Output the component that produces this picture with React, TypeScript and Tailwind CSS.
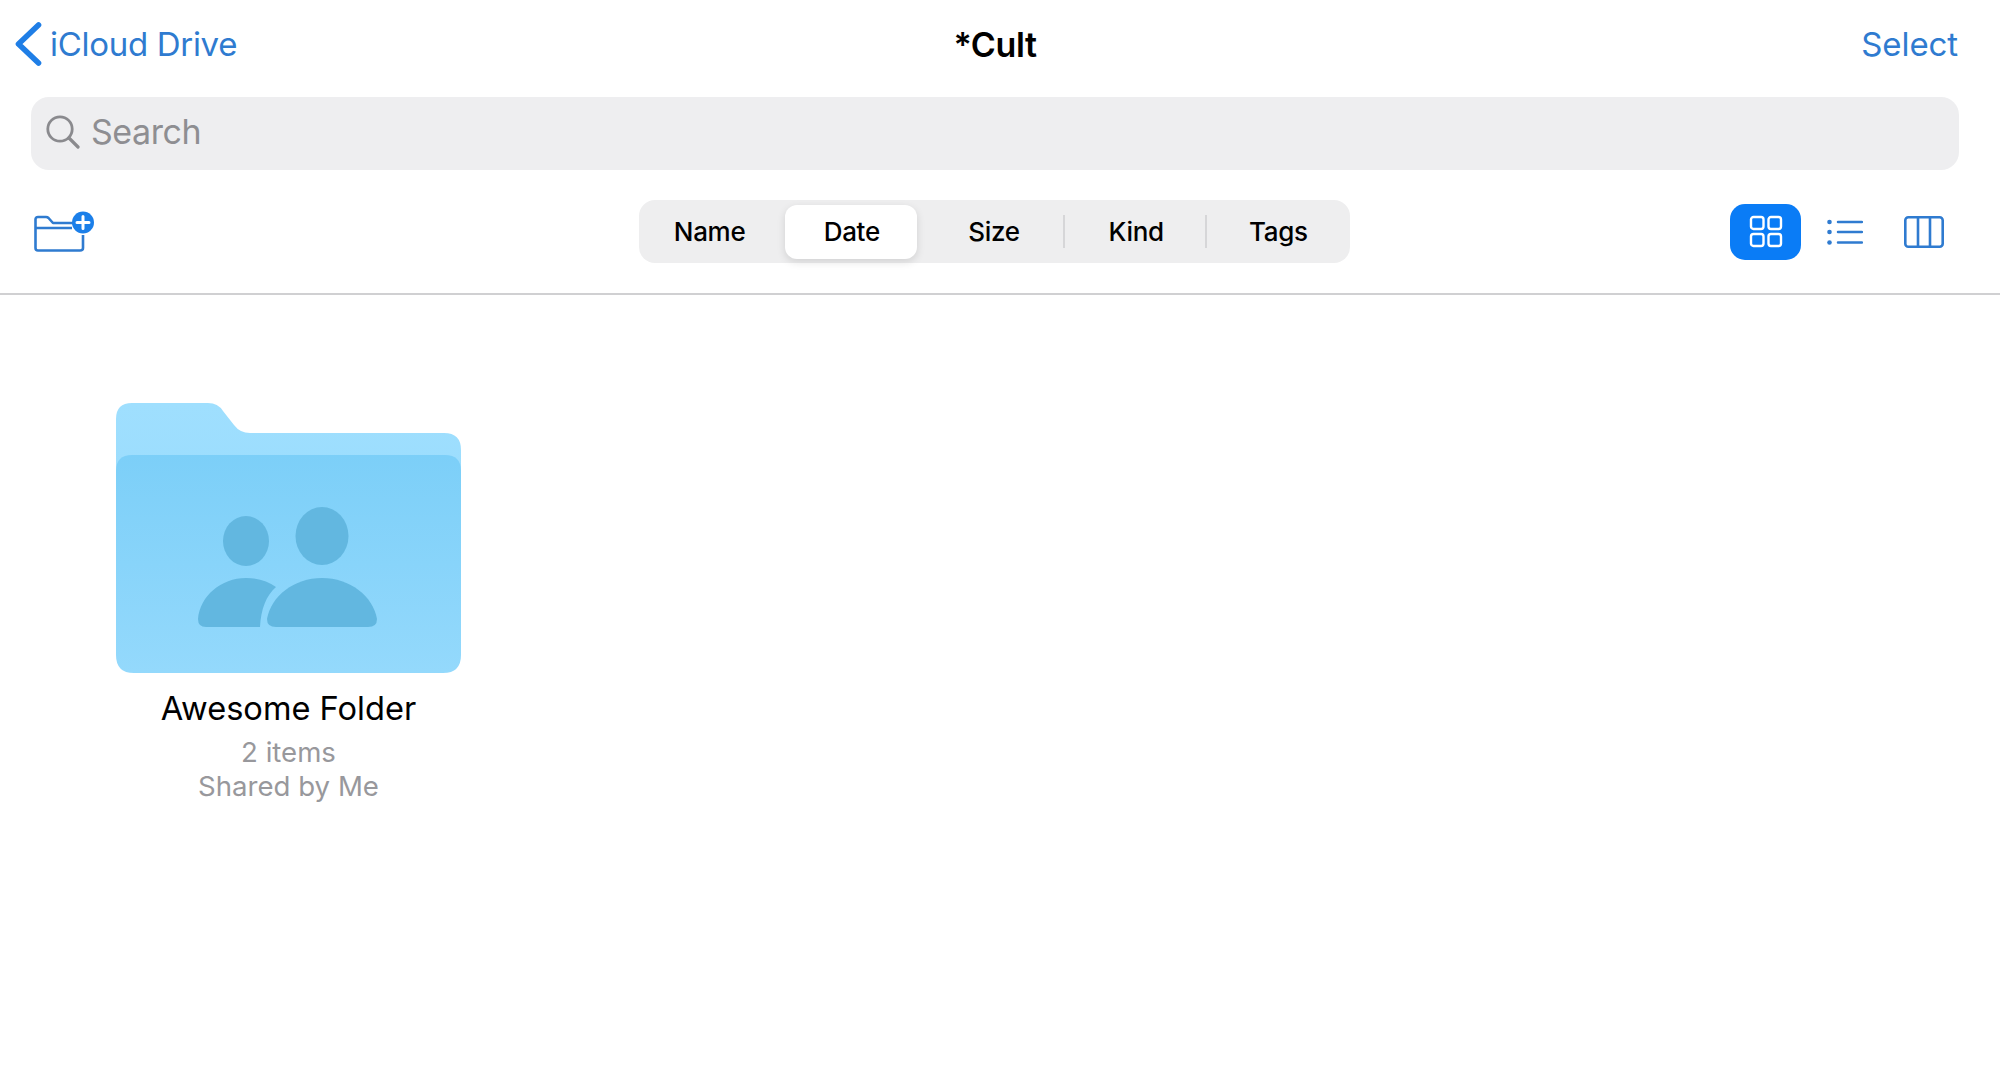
const font = { fontFamily: "Inter, 'Noto Sans', sans-serif" }

const tabs = ['Name', 'Date', 'Size', 'Kind', 'Tags']

const Chevron = () => (
    <svg width="27" height="44" viewBox="0 0 27 44" fill="none" className="shrink-0">
        <path d="M23.5 3 L3.5 22 L23.5 41" stroke="#1f7ee6" strokeWidth="5.6" strokeLinecap="round" strokeLinejoin="round" />
    </svg>
)

const SearchIcon = () => (
    <svg width="34" height="34" viewBox="0 0 34 34" fill="none" className="shrink-0">
        <circle cx="14" cy="14" r="12.2" stroke="#8a8a8e" strokeWidth="2.8" />
        <path d="M23 23 L32 32" stroke="#8a8a8e" strokeWidth="3.2" strokeLinecap="round" />
    </svg>
)

const NewFolderIcon = () => (
    <svg width="60" height="41" viewBox="0 0 60 41" fill="none">
        <path d="M46 12 H19 L14.5 7 Q13.5 6 12 6 H4 Q1.5 6 1.5 8.5 V37 Q1.5 39.5 4 39.5 H46 Q49 39.5 49 37 V24" stroke="#2f7bd0" strokeWidth="2.6" strokeLinejoin="round" />
        <path d="M1.5 17 H38" stroke="#2f7bd0" strokeWidth="2.6" />
        <circle cx="49" cy="11.5" r="11" fill="#1b7fe9" />
        <path d="M49 5.5 V17.5 M43 11.5 H55" stroke="white" strokeWidth="3" strokeLinecap="round" />
    </svg>
)

const GridIcon = () => (
    <svg width="34" height="33" viewBox="0 0 34 33" fill="none" stroke="white" strokeWidth="2.4">
        <rect x="2" y="2" width="12.5" height="12" rx="2.5" />
        <rect x="19.5" y="2" width="12.5" height="12" rx="2.5" />
        <rect x="2" y="19" width="12.5" height="12" rx="2.5" />
        <rect x="19.5" y="19" width="12.5" height="12" rx="2.5" />
    </svg>
)

const ListIcon = () => (
    <svg width="36" height="26" viewBox="0 0 36 26" fill="none">
        <circle cx="2.5" cy="3" r="2.3" fill="#2f7bd0" />
        <circle cx="2.5" cy="13" r="2.3" fill="#2f7bd0" />
        <circle cx="2.5" cy="23.5" r="2.3" fill="#2f7bd0" />
        <path d="M11 3 H35 M11 13 H35 M11 23.5 H35" stroke="#2f7bd0" strokeWidth="2.5" strokeLinecap="round" />
    </svg>
)

const ColumnsIcon = () => (
    <svg width="40" height="32" viewBox="0 0 40 32" fill="none" stroke="#2f7bd0" strokeWidth="2.6">
        <rect x="1.3" y="1.3" width="37.4" height="29.4" rx="3" />
        <path d="M14 1.3 V30.7 M26 1.3 V30.7" />
    </svg>
)

const SharedFolder = () => (
    <svg width="345" height="270" viewBox="0 0 345 270" className="block">
        <defs>
            <linearGradient id="back" x1="0" y1="0" x2="0" y2="1">
                <stop offset="0" stopColor="#9fdffe" />
                <stop offset="1" stopColor="#9adcfd" />
            </linearGradient>
            <linearGradient id="front" x1="0" y1="0" x2="0" y2="1">
                <stop offset="0" stopColor="#7ccff8" />
                <stop offset="1" stopColor="#94d9fc" />
            </linearGradient>
        </defs>
        <path d="M0 16 Q0 0 16 0 H92 Q102 0 107 8 L118 22 Q124 30 134 30 H328 Q345 30 345 47 V120 H0 Z" fill="url(#back)" />
        <path d="M0 68 Q0 52 16 52 H329 Q345 52 345 68 V252 Q345 270 327 270 H18 Q0 270 0 252 Z" fill="url(#front)" />
        <g fill="#62b7e0">
            <ellipse cx="130" cy="138" rx="23" ry="25" />
            <ellipse cx="206" cy="133" rx="26.5" ry="29" />
            <path d="M82 216 C84 193 105 175 130 175 C142 175 152 178 160 184 C150 193 145 206 144 224 H90 Q82 224 82 216 Z" />
            <path d="M151 216 C155 193 178 175 206 175 C234 175 257 193 261 216 Q261 224 252 224 H160 Q151 224 151 216 Z" />
        </g>
    </svg>
)

const App = () => {
    return (
        <div style={font} className="w-full h-[1083px] bg-white overflow-hidden antialiased">

            <div className="border-b-2 border-[#d0d0d2] h-[295px]">
                <div className="grid grid-cols-[1fr_auto_1fr] items-center h-[88px] pl-[15px] pr-[25px]">
                    <div className="flex items-center gap-[8px] text-[#2f7bd0] text-[33px] tracking-[-0.3px]">
                        <Chevron />
                        <span className="pt-[1px]">iCloud Drive</span>
                    </div>
                    <h1 className="text-[34px] font-semibold text-black tracking-[-0.4px]">*Cult</h1>
                    <div className="text-right pt-[1px] pr-[17px] text-[#2f7bd0] text-[33px] tracking-[-0.1px]">Select</div>
                </div>

                <div className="flex items-center gap-[11px] h-[73px] mt-[9px] ml-[31px] mr-[41px] pl-[15px] pb-[3px] rounded-[18px] bg-[#eeeef0]">
                    <SearchIcon />
                    <span className="mb-[2px] text-[34px] text-[#8e8e92] tracking-[-0.45px]">Search</span>
                </div>

                <div className="grid grid-cols-[1fr_auto_1fr] items-center mt-[30px] pl-[34px] pr-[46px]">
                    <NewFolderIcon />
                    <div className="flex w-[711px] h-[63px] items-center rounded-[16px] bg-[#eeeeef]">
                        {tabs.map((t, i) => (
                            <div key={t} className="relative flex items-center justify-center w-[142.2px] h-full text-[26px] font-[450] text-black tracking-[-0.3px]">
                                {t === 'Date' && <div className="absolute left-[4px] right-[6px] top-[5px] bottom-[4px] rounded-[12px] bg-white shadow-[0_3px_8px_rgba(0,0,0,0.12)]" />}
                                <span className="relative">{t}</span>
                                {i >= 2 && i < 4 && <div className="absolute right-0 top-[15px] bottom-[15px] w-[2px] bg-[#d6d6d8]" />}
                            </div>
                        ))}
                    </div>
                    <div className="flex items-center justify-end pr-[10px]">
                        <div className="flex items-center justify-center w-[71px] h-[56px] rounded-[15px] bg-[#0a7cf6]">
                            <GridIcon />
                        </div>
                        <div className="ml-[26px]"><ListIcon /></div>
                        <div className="ml-[41px]"><ColumnsIcon /></div>
                    </div>
                </div>
            </div>

            <div className="pt-[108px] pl-[116px]">
                <div className="w-[345px] flex flex-col items-center">
                    <SharedFolder />
                    <div className="mt-[16px] text-[32.6px] leading-[38px] text-black whitespace-nowrap">Awesome Folder</div>
                    <div className="mt-[8px] text-[27.6px] leading-[34px] text-[#98989c] whitespace-nowrap">2 items</div>
                    <div className="text-[27.6px] leading-[34px] text-[#98989c] whitespace-nowrap">Shared by Me</div>
                </div>
            </div>
        </div>
    )
}

export default App
